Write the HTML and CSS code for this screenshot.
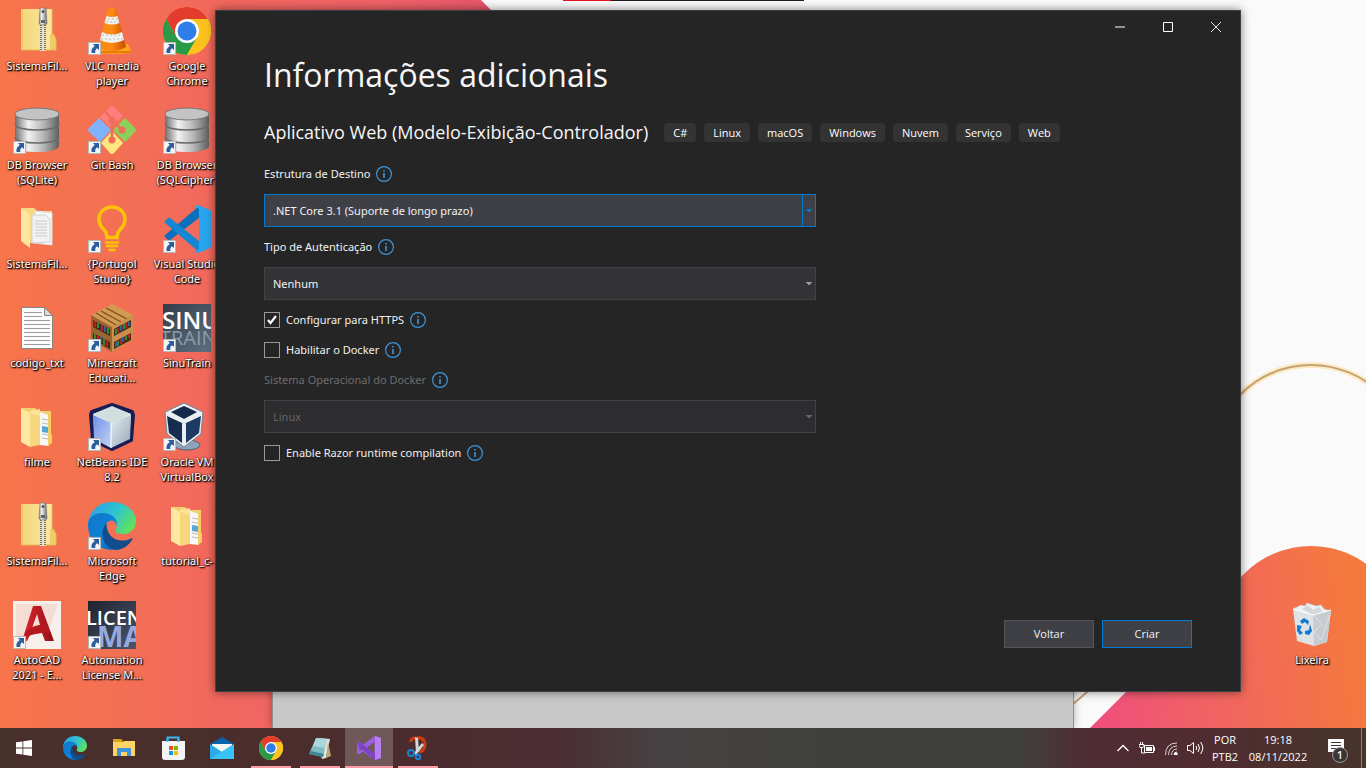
FILE: index.html
```html
<!DOCTYPE html>
<html lang="pt-BR">
<head>
<meta charset="utf-8">
<meta name="viewport" content="width=device-width, initial-scale=1">
<title>Informações adicionais</title>
<link rel="stylesheet" href="styles.css">
</head>
<body>
<svg class="defs" width="0" height="0" aria-hidden="true">
  <defs>
    <linearGradient id="gFold" x1="0" x2="1"><stop offset="0" stop-color="#f5d678"/><stop offset="1" stop-color="#fbe9a6"/></linearGradient>
    <linearGradient id="gMetal" x1="0" x2="1"><stop offset="0" stop-color="#6e6e6e"/><stop offset=".3" stop-color="#f2f2f2"/><stop offset=".65" stop-color="#b5b5b5"/><stop offset="1" stop-color="#5f5f5f"/></linearGradient>
    <linearGradient id="gOrange" x1="0" x2="1"><stop offset="0" stop-color="#f48b12"/><stop offset=".5" stop-color="#ff8a12"/><stop offset="1" stop-color="#c24e00"/></linearGradient>
    <linearGradient id="gEdgeTop" x1="0" x2="1" y1=".2" y2=".7"><stop offset="0" stop-color="#2a9fe8"/><stop offset=".5" stop-color="#2fc4cf"/><stop offset="1" stop-color="#63e354"/></linearGradient>
    <linearGradient id="gEdgeBody" x1="0" x2="1" y1="0" y2="1"><stop offset="0" stop-color="#1474c4"/><stop offset=".6" stop-color="#0a84dc"/><stop offset="1" stop-color="#0c5aa8"/></linearGradient>
    <linearGradient id="gCad" x1="0" x2="1"><stop offset="0" stop-color="#e0252c"/><stop offset="1" stop-color="#8f1219"/></linearGradient>
    <linearGradient id="gSinu" x1="0" x2="1" y2="1"><stop offset="0" stop-color="#333d48"/><stop offset="1" stop-color="#5e7082"/></linearGradient>
    <linearGradient id="gLic" x1="0" x2="1" y2="1"><stop offset="0" stop-color="#1f232e"/><stop offset="1" stop-color="#4b566d"/></linearGradient>
    <linearGradient id="gCubeL" x1="0" y1="0" x2="1" y2="1"><stop offset="0" stop-color="#6f8fe6"/><stop offset="1" stop-color="#c3d4f6"/></linearGradient>
    <linearGradient id="gCubeR" x1="0" y1="0" x2="1" y2="1"><stop offset="0" stop-color="#e6edf2"/><stop offset="1" stop-color="#93a7b5"/></linearGradient>

    <symbol id="shortcut" viewBox="0 0 13 13"><path d="M.5.5h12v12H.5z" fill="#f4f4f4" stroke="#b8b8b8"/><path d="M5 2h6v6L9 6.200C7.300 7.500 7 9 7.300 11H3.600C2.800 8 4.200 5.700 6.800 4z" fill="#2b5c9e"/></symbol>

    <symbol id="zip" viewBox="0 0 48 48">
      <path d="M8 2h31v25l3 4v12H8z" fill="url(#gFold)"/><path d="M8 2h2v41H8zM37 27l4 0 2 5v11h-6z" fill="#f0cd68"/><path d="M39 2v25l4 5v11H8" fill="none" stroke="#e2bd58"/>
      <path d="M27 18h6v26h-6z" fill="#e7e0c5"/><path d="M28 18v26M32 18v26" stroke="#77746c" stroke-width="2" stroke-dasharray="1 1"/>
      <path d="M27 1h6l1 16q-4 2-8 0z" fill="url(#gMetal)" stroke="#777" stroke-width=".6"/><circle cx="30" cy="4.500" r="1.500" fill="#555"/><path d="M28 13h4v3h-4z" fill="#666"/>
    </symbol>
    <symbol id="folder" viewBox="0 0 48 48">
      <path d="M8 5h14l3 3h13v31H14z" fill="#f3d06f"/><path d="M27 9l9 3v31l-9-1z" fill="#f7f7f5"/><path d="M29 16l6 1M29 20l6 1M29 31l6 1M29 35l6 1" stroke="#bbb"/><path d="M29 23l6 1v6l-6-1z" fill="#56a7d4"/><path d="M17 8l10-2v31l-9 4z" fill="#fbe49a"/><path d="M8 5l9 5v34l-9-5z" fill="#ffe8a0"/><path d="M17 10l10 3v29l-10 2z" fill="#f6d77e"/><path d="M35 9l3 1v20l1 2v8l-4 3z" fill="#f2cd68"/>
    </symbol>
    <symbol id="docs" viewBox="0 0 48 48">
      <path d="M8 3h13l3 3h15v32H14z" fill="#f7d985"/><path d="M22 6l17 2v32l-18-2z" fill="#fafafa" stroke="#ddd"/><path d="M19 10l14 0 4 4v23l-18 1z" fill="#f2f2f2" stroke="#d0d0d0"/><path d="M22 16l12 0M22 19l12 0M22 22l12 0M22 25l12 0M22 28l12 0M22 31l12 0" stroke="#ccc"/><path d="M8 3l9 7v33l-9-7z" fill="#ffe6a2"/>
    </symbol>
    <symbol id="db" viewBox="0 0 48 48">
      <path d="M2 34v6c0 8 44 8 44 0v-6z" fill="url(#gMetal)"/><path d="M2 21v10c0 8 44 8 44 0V21z" fill="url(#gMetal)"/><path d="M2 31c0 8 44 8 44 0" fill="none" stroke="#6b6b6b" stroke-width="1.500"/><path d="M2 8v10c0 8 44 8 44 0V8z" fill="url(#gMetal)"/><path d="M2 18c0 8 44 8 44 0" fill="none" stroke="#6b6b6b" stroke-width="1.500"/><ellipse cx="24" cy="8" rx="22" ry="6" fill="#c3c3c3" stroke="#777"/>
    </symbol>
    <symbol id="chrome" viewBox="0 0 48 48">
      <circle cx="24" cy="24" r="24" fill="#fbc116"/><path d="M3.200 12A24 24 0 0 1 44.800 12H24L13.600 30z" fill="#e33b2e"/><path d="M3.200 12A24 24 0 0 0 24 48L34.400 30 24 24 13.600 30z" fill="#2a9a48"/><path d="M44.800 12A24 24 0 0 1 24 48L34.400 30 24 12z" fill="#fcc31e"/><circle cx="24" cy="24" r="12" fill="#fff"/><circle cx="24" cy="24" r="9.500" fill="#2f7de9"/>
    </symbol>
    <symbol id="edge" viewBox="0 0 48 48">
      <path d="M0 22C1 9 11 0 24 0c14 0 24 9 24 19 0 8-6 13-12 13-7 0-10-2-8-5 2-5 0-9-9-12-8-2-16 2-19 7z" fill="url(#gEdgeTop)"/>
      <path d="M0 23c0-8 7-12 14-12 9 0 16 5 15 13-2-7-8-7-11-2-4 8 1 22 13 25C13 51 0 39 0 23z" fill="url(#gEdgeBody)"/>
      <path d="M18.500 21c-8 10-4 25 10.500 27 7-1 12-5 15-10 1-2 0-2-2-1-12 5-24-2-23.500-16z" fill="#114c8c"/>
    </symbol>
    <symbol id="info" viewBox="0 0 16 16"><circle cx="8" cy="8" r="7.400" fill="none" stroke="#3f94d8" stroke-width="1.200"/><path d="M7.200 4h1.600v1.600H7.200zM7.200 7h1.600v5H7.200z" fill="#3f94d8"/></symbol>
    <symbol id="arrow" viewBox="0 0 6 4"><path d="M0 0h6v1H5v1H4v1H2V2H1V1H0z" fill="currentColor"/></symbol>
  </defs>
</svg>

<main class="desktop">
  <svg class="wallpaper" viewBox="0 0 1366 728" preserveAspectRatio="none" aria-hidden="true">
    <defs>
      <linearGradient id="wLeft" gradientUnits="userSpaceOnUse" x1="0" y1="0" x2="510" y2="0"><stop offset="0" stop-color="#f7744b"/><stop offset=".22" stop-color="#f37053"/><stop offset=".45" stop-color="#f2675f"/><stop offset=".75" stop-color="#ef6268"/><stop offset="1" stop-color="#e4546a"/></linearGradient>
      <linearGradient id="wRight" gradientUnits="userSpaceOnUse" x1="1100" y1="700" x2="1366" y2="660"><stop offset="0" stop-color="#f0507b"/><stop offset=".4" stop-color="#f16363"/><stop offset="1" stop-color="#f47a3c"/></linearGradient>
    </defs>
    <path d="M0 0h1366v728H0z" fill="#fafafa"/>
    <path d="M0 0h481l170 170v558H0z" fill="url(#wLeft)"/>
    <path d="M1240 395A99 99 0 0 1 1410 465" fill="none" stroke="#fdebc8" stroke-width="6"/>
    <path d="M1240 395A99 99 0 0 1 1410 465M1066 710l40-34" fill="none" stroke="#c5a370" stroke-width="2"/>
    <path d="M1090 728L1245 573A94 94 0 0 1 1405 639V728z" fill="url(#wRight)"/>
  </svg>
  <div class="recorder"></div>
  <div class="backwin"></div>

  <div class="icons">
    <a class="item" href="#"><svg class="pic" viewBox="0 0 48 48"><use href="#zip"/></svg><span>SistemaFil...</span></a>
    <a class="item" href="#"><svg class="pic" viewBox="0 0 48 48"><path d="M8 37h32l4 9q-20 2-40 0z" fill="#ffa41c"/><path d="M5 44h39v2H4z" fill="#e77c05"/><path d="M22 1h4q3 0 4 8l8 31q-14 8-28 0l8-31q1-8 4-8z" fill="url(#gOrange)"/><path d="M18.500 9q5 2 11 0l2 7q-8 3-15 0zM14 25q10 5 20 0l2 8q-12 6-24 0z" fill="#f1f1ee"/><path d="M20 12h10M18 15h13M14 28h20M13 32h22" stroke="#b7bcc0" stroke-dasharray="2 2"/></svg><span>VLC media<br>player</span><svg class="sc"><use href="#shortcut"/></svg></a>
    <a class="item" href="#"><svg class="pic" viewBox="0 0 48 48"><use href="#chrome"/></svg><span>Google<br>Chrome</span><svg class="sc"><use href="#shortcut"/></svg></a>

    <a class="item" href="#"><svg class="pic" viewBox="0 0 48 48"><use href="#db"/></svg><span>DB Browser<br>(SQLite)</span><svg class="sc"><use href="#shortcut"/></svg></a>
    <a class="item" href="#"><svg class="pic" viewBox="0 0 48 48"><path d="M22 1q2-2 4 0l9 9-12 12-11-11z" fill="#ff7f7f"/><path d="M37 12l10 10q2 2 0 4L37 36 25 24z" fill="#8ccf5c"/><path d="M11 12l12 12-11 12L1 26q-2-2 0-4z" fill="#80b3ff"/><path d="M24 25l11 12-9 10q-2 2-4 0L13 37z" fill="#ffe680"/><path d="M17 5l7 9v20M24 14l10 10" fill="none" stroke="#f26d58" stroke-width="2.500"/><circle cx="24" cy="14" r="3.500" fill="#f26d58"/><circle cx="24" cy="34" r="3.500" fill="#f26d58"/><circle cx="34" cy="24" r="3.500" fill="#f26d58"/></svg><span>Git Bash</span><svg class="sc"><use href="#shortcut"/></svg></a>
    <a class="item" href="#"><svg class="pic" viewBox="0 0 48 48"><use href="#db"/></svg><span>DB Browser<br>(SQLCipher)</span><svg class="sc"><use href="#shortcut"/></svg></a>

    <a class="item" href="#"><svg class="pic" viewBox="0 0 48 48"><use href="#docs"/></svg><span>SistemaFil...</span></a>
    <a class="item" href="#"><svg class="pic" viewBox="0 0 48 48"><path d="M19 32.500h10q0-5 4-9 4-4 4-9.500A13 12 0 0 0 11 14q0 5.500 4 9.500 4 4 4 9z" fill="none" stroke="#ffc107" stroke-width="3.600"/><path d="M18 37.500h12M19 41h10M21.500 45h5" stroke="#ffc107" stroke-width="2.600" stroke-linecap="round"/></svg><span>{Portugol<br>Studio}</span><svg class="sc"><use href="#shortcut"/></svg></a>
    <a class="item" href="#"><svg class="pic" viewBox="0 0 48 48"><path d="M1 31l4 4q1 1 2 0l29-22V1z" fill="#0a70bb"/><path d="M1 17l4-4q1-1 2 0l29 23v11z" fill="#1587d2"/><path d="M35 0l12 5q1 1 1 2v34q0 1-1 2l-12 5q-2 0-3-2l4-2V4l-4-2q1-2 3-2z" fill="#27a5ee"/></svg><span>Visual Studio<br>Code</span><svg class="sc"><use href="#shortcut"/></svg></a>

    <a class="item" href="#"><svg class="pic" viewBox="0 0 48 48"><path d="M8.500 3.500h23l8 8v33h-31z" fill="#fcfcfc" stroke="#858585"/><path d="M31.500 3.500v8h8z" fill="#d8d8d8" stroke="#858585"/><path d="M11 8.500h18M11 12.500h18M11 16.500h26M11 20.500h26M11 24.500h26M11 28.500h26M11 32.500h26M11 36.500h26M11 40.500h26" stroke="#9d9d9d"/></svg><span>codigo_txt</span></a>
    <a class="item" href="#"><svg class="pic" viewBox="0 0 48 48"><path d="M24 0l21 11-21 12L3 11z" fill="#d09a50"/><path d="M18 4l21 11M13 7l20 11M8 9l20 12" stroke="#7c4d22" stroke-width="1.400"/><path d="M3 11l21 12v25L3 36z" fill="#9b6531"/><path d="M45 11L24 23v25l21-12z" fill="#c98f4c"/><path d="M5 16l17 9v7L5 23zM5 29l17 9v7L5 35z" fill="#3c2a1d"/><path d="M43 16l-17 9v7l17-9zM43 29l-17 9v7l17-9z" fill="#4a2b18"/><path d="M7 17v6M14 21v6M10 32v5M19 36v6M30 24v5M38 19v5M33 35v5M41 30v4" stroke="#b3221f" stroke-width="2.500"/><path d="M10 19v5M20 24v6M7 30v5M16 35v6M28 25v5M36 20v5M30 37v5M38 32v4" stroke="#2d8b35" stroke-width="2"/><path d="M17 22v6M13 33v6M33 22v5M41 18v4M28 38v5M35 33v5" stroke="#2b5fa6" stroke-width="2"/></svg><span>Minecraft<br>Educati...</span><svg class="sc"><use href="#shortcut"/></svg></a>
    <a class="item" href="#"><svg class="pic" viewBox="0 0 48 48"><path d="M0 0h48v48H0z" fill="url(#gSinu)"/><text x="-1" y="25" class="sinu">SINU</text><text x="-3" y="41" class="train">TRAIN</text></svg><span>SinuTrain</span><svg class="sc"><use href="#shortcut"/></svg></a>

    <a class="item" href="#"><svg class="pic" viewBox="0 0 48 48"><use href="#folder"/></svg><span>filme</span></a>
    <a class="item" href="#"><svg class="pic" viewBox="0 0 48 48"><path d="M24 2l20 7 1 3-2 25-19 9L5 37 3 12l1-3z" fill="#e9eef4" stroke="#191c52" stroke-width="4" stroke-linejoin="round"/><path d="M24 3l19 8-20 9L5 11z" fill="#cfe0de"/><path d="M5 12l18 8v25L6 36z" fill="url(#gCubeL)"/><path d="M43 12l-20 8v25l19-9z" fill="url(#gCubeR)"/><path d="M23 20v25" stroke="#fff"/></svg><span>NetBeans IDE<br>8.2</span><svg class="sc"><use href="#shortcut"/></svg></a>
    <a class="item" href="#"><svg class="pic" viewBox="0 0 48 48"><ellipse cx="24" cy="42" rx="13" ry="5" fill="#8da4b8" stroke="#4d6379"/><path d="M21 0l19 9-2 22-17 13L4 31 2 9z" fill="#e9eef2" stroke="#71818f"/><path d="M21 3l13 6-13 7L8 9z" fill="#14284a"/><path d="M4 13l15 7v20L6 30z" fill="#162c50"/><path d="M38 13l-15 7v20l13-10z" fill="#1d3a63"/></svg><span>Oracle VM<br>VirtualBox</span><svg class="sc"><use href="#shortcut"/></svg></a>

    <a class="item" href="#"><svg class="pic" viewBox="0 0 48 48"><use href="#zip"/></svg><span>SistemaFil...</span></a>
    <a class="item" href="#"><svg class="pic" viewBox="0 0 48 48"><use href="#edge"/></svg><span>Microsoft<br>Edge</span><svg class="sc"><use href="#shortcut"/></svg></a>
    <a class="item" href="#"><svg class="pic" viewBox="0 0 48 48"><use href="#folder"/></svg><span>tutorial_c-</span></a>

    <a class="item" href="#"><svg class="pic" viewBox="0 0 48 48"><path d="M0 0h48v48H0z" fill="#f7efec"/><path d="M3 3h42l-8 23-34 12z" fill="#f3ddd5"/><path d="M20 5h8l13 35h-9l-3-8-12 2-3 6H9zM24 13l-5 14 8-3z" fill="url(#gCad)" fill-rule="evenodd"/><path d="M12 31q10-9 22-7l4 8q-14-3-25 5z" fill="#b5181f"/></svg><span>AutoCAD<br>2021 - E...</span><svg class="sc"><use href="#shortcut"/></svg></a>
    <a class="item" href="#"><svg class="pic" viewBox="0 0 48 48"><path d="M0 0h48v48H0z" fill="url(#gLic)"/><text x="-2" y="24" class="lic">LICEN</text><text x="9" y="46" class="ma">MA</text></svg><span>Automation<br>License M...</span><svg class="sc"><use href="#shortcut"/></svg></a>
  </div>

  <a class="item bin" href="#"><svg class="pic" viewBox="0 0 48 48"><path d="M5 8l8-4 4 1 2-3 6 2 3 1 5-1 3 4 7 2-19 6z" fill="#f0f1f2" stroke="#c4c8cb" stroke-width=".7"/><path d="M14 8l6-4 5 5 6-3 4 5-10 3z" fill="#d3d7da"/><path d="M5 8l20 6 18-5-4 32-13 4-17-5z" fill="#dfe3e6"/><path d="M25 14l18-5-4 32-13 4z" fill="#c7ccd1"/><path d="M25 14l9 9-8 8 7 8 5-14 4-11M6 13l6 8-4 9 6 11" fill="none" stroke="#dde1e4"/><path d="M5 8l20 6 18-5" fill="none" stroke="#fff"/><path d="M12 20l4-3 5 3-1 4-3-3-3 2zM9 24l5 1-2 4 3 3-3 2-3-4zM22 23l2 7-3 4-4-1 0-3 4-1z" fill="#0f7bd4"/></svg><span>Lixeira</span></a>

  <section class="dialog" aria-labelledby="title">
    <header class="titlebar">
      <button aria-label="Minimizar"><svg width="10" height="10" viewBox="0 0 10 10"><path d="M0 5h10" stroke="#fff"/></svg></button>
      <button aria-label="Maximizar"><svg width="10" height="10" viewBox="0 0 10 10"><path d="M.5.5h9v9h-9z" fill="none" stroke="#fff"/></svg></button>
      <button aria-label="Fechar"><svg width="10" height="10" viewBox="0 0 10 10"><path d="M0 0l10 10M10 0L0 10" stroke="#e8e8e8"/></svg></button>
    </header>
    <div class="body">
      <h1 id="title">Informações adicionais</h1>
      <div class="project">
        <h2>Aplicativo Web (Modelo-Exibição-Controlador)</h2>
        <ul class="tags"><li>C#</li><li>Linux</li><li>macOS</li><li>Windows</li><li>Nuvem</li><li>Serviço</li><li>Web</li></ul>
      </div>
      <form class="form" id="options">
        <div class="row"><label for="framework">Estrutura de Destino</label><svg class="info"><use href="#info"/></svg></div>
        <div class="combo active"><select id="framework"><option>.NET Core 3.1 (Suporte de longo prazo)</option></select><span class="drop"><svg width="6" height="4"><use href="#arrow"/></svg></span></div>
        <div class="row"><label for="auth">Tipo de Autenticação</label><svg class="info"><use href="#info"/></svg></div>
        <div class="combo"><select id="auth"><option>Nenhum</option></select><span class="drop"><svg width="6" height="4"><use href="#arrow"/></svg></span></div>
        <div class="row"><input type="checkbox" id="https" checked><label for="https">Configurar para HTTPS</label><svg class="info"><use href="#info"/></svg></div>
        <div class="row"><input type="checkbox" id="docker"><label for="docker">Habilitar o Docker</label><svg class="info"><use href="#info"/></svg></div>
        <div class="row muted"><label for="dockeros">Sistema Operacional do Docker</label><svg class="info"><use href="#info"/></svg></div>
        <div class="combo disabled"><select id="dockeros" disabled><option>Linux</option></select><span class="drop"><svg width="6" height="4"><use href="#arrow"/></svg></span></div>
        <div class="row"><input type="checkbox" id="razor"><label for="razor">Enable Razor runtime compilation</label><svg class="info"><use href="#info"/></svg></div>
      </form>
    </div>
    <footer class="actions">
      <button type="button">Voltar</button>
      <button type="submit" form="options" class="primary">Criar</button>
    </footer>
  </section>
</main>

<nav class="taskbar" aria-label="Barra de tarefas">
  <button class="start" aria-label="Iniciar"><svg width="16" height="16" viewBox="0 0 16 16"><path d="M0 2.300L6.500 1.400v6.200H0zM7.300 1.300L16 0v7.600H7.300zM0 8.400h6.500v6.200L0 13.700zM7.300 8.400H16V16l-8.700-1.300z" fill="#fff"/></svg></button>
  <button aria-label="Microsoft Edge"><svg width="24" height="24" viewBox="0 0 48 48"><use href="#edge"/></svg></button>
  <button aria-label="Explorador de Arquivos"><svg width="24" height="24" viewBox="0 0 24 24"><path d="M1 3h8l2 2-2 3H1z" fill="#e0a11b"/><path d="M1 6h10l1-1h11v15H1z" fill="#ffd467"/><path d="M5 20v-7q0-1 1-1h12q1 0 1 1v7h-4v-4H9v4z" fill="#3d93dc"/></svg></button>
  <button aria-label="Microsoft Store"><svg width="24" height="24" viewBox="0 0 24 24"><path d="M6.500 7V1.500h11V7" fill="none" stroke="#38b6f5" stroke-width="2"/><path d="M1 5h23v16q0 3-3 3H4q-3 0-3-3z" fill="#f4f4f4"/><path d="M6.500 3v3M17.500 3v3" stroke="#38b6f5" stroke-width="2"/><path d="M8 10h4v4H8z" fill="#f25022"/><path d="M13 10h4v4h-4z" fill="#7fba00"/><path d="M8 15h4v4H8z" fill="#00a4ef"/><path d="M13 15h4v4h-4z" fill="#ffb900"/></svg></button>
  <button aria-label="Email"><svg width="24" height="24" viewBox="0 0 24 24"><path d="M0 8l12-7 12 7z" fill="#0b62ad"/><path d="M2 8h20v8H2z" fill="#f5f5f5"/><path d="M0 8l12 8 12-8v15H0z" fill="#2aaae9"/><path d="M0 23L24 8v15z" fill="#38c2f5"/></svg></button>
  <button class="open" aria-label="Google Chrome"><svg width="24" height="24" viewBox="0 0 48 48"><use href="#chrome"/></svg></button>
  <button class="open" aria-label="Bloco de notas"><svg width="24" height="24" viewBox="0 0 24 24"><path d="M9 2l13 1-4 19-4 1z" fill="#e5e3da"/><path d="M20 6l3 14-5 2z" fill="#b9a77d"/><path d="M8 2l11 1-4 18-14-3z" fill="#7fbcc6"/><path d="M8 2l11 1-2 9-12-2z" fill="#a9d7dc"/><path d="M1 18l14 3 1-3-13-3z" fill="#3f8795"/></svg></button>
  <button class="open current" aria-label="Visual Studio"><svg width="24" height="24" viewBox="0 0 24 24"><path d="M0 6.500l2-1 4 3L18 0l6 2v20l-6 2L6 15.500l-4 3-2-1zM2.500 9v6l3-3zM9.500 12l8 6V6z" fill="#9a5fe0" fill-rule="evenodd"/><path d="M18 0l6 2v20l-6 2z" fill="#b581f2"/><path d="M0 6.500l2-1L18 18v6L2 11z" fill="#7d42c8"/></svg></button>
  <button class="open" aria-label="Ferramenta de Captura"><svg width="24" height="24" viewBox="0 0 24 24"><path d="M5 6q-1-4 6-4 7-1 8 6 0 7-6 8" fill="none" stroke="#d23b10" stroke-width="3"/><path d="M9 1l3 1 1 14-3 1zM16 7l2 2-8 10-2-2z" fill="#d4d7da"/><circle cx="5" cy="17" r="3" fill="none" stroke="#1786d4" stroke-width="2"/><circle cx="12" cy="21" r="2.200" fill="none" stroke="#1786d4" stroke-width="2"/></svg></button>
  <div class="tray">
    <button class="t24" aria-label="Mostrar ícones ocultos"><svg width="12" height="8" viewBox="0 0 12 8"><path d="M.5 7L6 1.500 11.500 7" fill="none" stroke="#fff" stroke-width="1.300"/></svg></button>
    <button class="t24" aria-label="Bateria"><svg width="16" height="12" viewBox="0 0 16 12"><path d="M5.500 3.500h9v7h-9z" fill="none" stroke="#fff"/><path d="M7 5h6v4H7zM15 5h1v4h-1z" fill="#fff"/><path d="M1.500 0v2M3.500 0v2M0 2.500h5v2L2.500 6 0 4.500zM2.500 5v6H6" fill="none" stroke="#fff"/></svg></button>
    <button class="t24" aria-label="Rede"><svg width="13" height="13" viewBox="0 0 13 13"><g fill="none" stroke="#d8d0d0"><path d="M.5 13Q.5 1 12 1M3.500 13Q4 4 12 4M6.500 13Q7 7 12 7"/></g><circle cx="11" cy="12" r="1.700" fill="#fff"/><path d="M9 13q0-3 3-3" fill="none" stroke="#fff"/></svg></button>
    <button class="t24" aria-label="Volume"><svg width="17" height="14" viewBox="0 0 17 14"><path d="M.5 4.500h2.500l3.500-3v11L3 9.500H.5zM9 5q1.500 2 0 4M11 3q3 4 0 8M13.500 1q4.500 6 0 12" fill="none" stroke="#fff"/></svg></button>
    <button class="lang">POR<br>PTB2</button>
    <button class="clock">19:18<br>08/11/2022</button>
    <button class="notes" aria-label="Notificações"><svg width="26" height="20" viewBox="0 0 26 20"><path d="M4 1h16v13h-7l-4 4v-4H4z" fill="#fff"/><path d="M7 4.500h10M7 7.500h10M7 10.500h6" stroke="#4a2f2d"/></svg><span class="badge">1</span></button>
    <span class="peek"></span>
  </div>
</nav>
</body>
</html>
```

FILE: styles.css
```css
* { box-sizing: border-box; }

body {
  margin: 0;
  min-height: 100vh;
  display: flex;
  flex-direction: column;
  overflow: hidden;
  font: 11px/15px "Open Sans", "Noto Sans", sans-serif;
  color: #f1f1f1;
}

button, select, input { font: inherit; color: inherit; margin: 0; }
button { border: 0; padding: 0; background: none; }
.defs { position: absolute; }

.desktop { flex: 1; position: relative; overflow: hidden; }
.wallpaper { position: absolute; inset: 0; width: 100%; height: 100%; }

.recorder {
  position: absolute;
  top: 0;
  left: 563px;
  width: 241px;
  height: 1px;
  background: linear-gradient(90deg, #e81123 20%, #1f1f1f 20%);
}

.backwin {
  position: absolute;
  left: 272px;
  right: 292px;
  top: 40px;
  bottom: 0;
  background: #c8c8c8;
  border: 1px solid #8f8f8f;
  border-bottom: 0;
  box-shadow: 0 0 8px rgba(0, 0, 0, .3);
}

/* Desktop shortcuts */
.icons {
  position: relative;
  display: grid;
  grid-template-columns: repeat(3, 74px);
  grid-auto-rows: 99px;
  column-gap: 1px;
  width: 224px;
}

.item {
  position: relative;
  display: flex;
  flex-direction: column;
  align-items: center;
  gap: 3px;
  padding-top: 7px;
  color: #fff;
  font-family: "Noto Sans", sans-serif;
  text-align: center;
  text-decoration: none;
  white-space: nowrap;
  text-shadow: 0 0 2px #000, 1px 1px 2px #000, 1px 1px 1px rgba(0, 0, 0, .8);
}

.pic { width: 48px; height: 48px; flex: none; }
.sc { position: absolute; left: 13px; top: 42px; width: 13px; height: 13px; }
.bin { position: absolute; right: 17px; top: 594px; width: 74px; }

.sinu, .train, .lic, .ma { font-family: "Open Sans", sans-serif; text-shadow: none; }
.sinu { font-size: 24px; font-weight: 600; fill: #fff; }
.train { font-size: 20px; fill: #8d9cab; }
.lic { font-size: 20px; font-weight: 600; fill: #fff; }
.ma { font-size: 28px; font-weight: 700; fill: #95a9de; }

/* Project dialog */
.dialog {
  position: absolute;
  left: 215px;
  right: 125px;
  top: 10px;
  bottom: 36px;
  display: flex;
  flex-direction: column;
  background: #252526;
  border: 1px solid #3f3f46;
  box-shadow: 0 0 9px rgba(0, 0, 0, .5);
}

.titlebar { display: flex; justify-content: flex-end; height: 32px; }
.titlebar button { width: 48px; display: grid; place-items: center; }

.body { flex: 1; padding: 8px 48px 0; }
h1, h2 { margin: 0; font-weight: 400; color: #f6f6f6; }
h1 { font-size: 32px; line-height: 48px; }
h2 { font-size: 18px; line-height: 28px; }

.project { display: flex; align-items: center; gap: 16px; margin-top: 19px; }
.tags { display: flex; gap: 8px; margin: 0; padding: 0; list-style: none; }
.tags li { padding: 2px 9px; border-radius: 4px; background: #333334; color: #fff; }

.form {
  display: flex;
  flex-direction: column;
  gap: 10px;
  max-width: 552px;
  margin-top: 18px;
  font-family: "Noto Sans", sans-serif;
}

.row { display: flex; align-items: center; gap: 6px; height: 20px; }
.row label { padding-bottom: 1px; }
.row.muted label { color: #6d6d6d; }
.info { width: 16px; height: 16px; }

.row input {
  appearance: none;
  width: 16px;
  height: 16px;
  border: 1px solid #999;
  background: #252526;
}
.row input:checked {
  background: #252526 url("data:image/svg+xml,%3Csvg xmlns='http://www.w3.org/2000/svg' viewBox='0 0 14 14'%3E%3Cpath d='M3 7l2.500 3L11 3' fill='none' stroke='white' stroke-width='2.200'/%3E%3C/svg%3E") center / 14px 14px;
}

.combo {
  display: flex;
  height: 33px;
  border: 1px solid #434346;
  background: #333337;
  color: #f1f1f1;
}
.combo select {
  flex: 1;
  min-width: 0;
  appearance: none;
  border: 0;
  padding: 0 8px;
  background: none;
  outline: 0;
  opacity: 1;
}
.drop {
  width: 13px;
  display: grid;
  place-items: center;
  border-left: 1px solid transparent;
  color: #999;
}
.combo.active { border-color: #007acc; background: #3f3f46; }
.combo.active .drop { border-color: #007acc; color: #007acc; }
.combo.disabled { background: #2d2d30; color: #656565; }
.combo.disabled .drop { color: #656565; }

.actions { display: flex; justify-content: flex-end; gap: 8px; padding: 0 48px 43px; }
.actions button {
  width: 90px;
  height: 28px;
  padding-bottom: 2px;
  background: #3f3f46;
  border: 1px solid #555;
}
.actions .primary { border-color: #007acc; }

/* Taskbar */
.taskbar {
  position: relative;
  display: flex;
  gap: 1px;
  height: 40px;
  background: linear-gradient(90deg, #48302b, #4a2d2c 20%, #4b2c32 40%, #474142 48%, #40413d 60%, #40413d 74%, #4f2c34 80%, #502c31 88%, #47342b);
}
.taskbar button {
  width: 48px;
  display: grid;
  place-items: center;
}
.taskbar .start { margin-right: 2px; }
.taskbar .open {
  background: linear-gradient(#ff9ba2, #ff9ba2) bottom / 40px 2px no-repeat;
}
.taskbar .current {
  background: linear-gradient(#ff9ba2, #ff9ba2) bottom / 48px 2px no-repeat, #715858;
}

.tray { display: flex; margin-left: auto; }
.tray .t24 { width: 24px; }
.tray .lang, .tray .clock { display: block; line-height: 17px; color: #fff; }
.tray .lang { width: 36px; }
.tray .clock { width: 70px; }
.tray .notes { position: relative; width: 48px; }
.badge {
  position: absolute;
  right: 13px;
  bottom: 5px;
  width: 16px;
  height: 16px;
  border: 1px solid #999;
  border-radius: 50%;
  background: #3b3635;
  line-height: 14px;
  font-weight: 600;
}
.peek { width: 5px; border-left: 1px solid #8d7f7b; }
```
